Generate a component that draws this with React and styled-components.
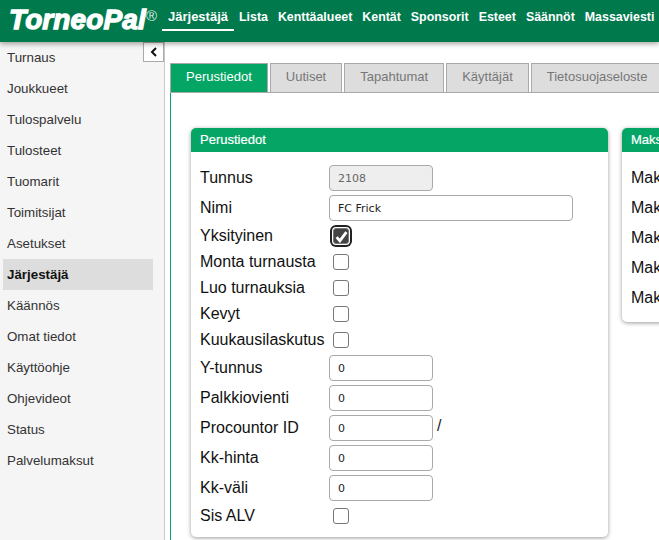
import React from "react";
import styled, { createGlobalStyle } from "styled-components";

const Global = createGlobalStyle`
  html, body { margin: 0; padding: 0; height: 100%; overflow: hidden; background: #fff; }
  body { font-family: "Liberation Sans", Arial, sans-serif; }
  #root { height: 100%; }
`;
const Page = styled.div`
  height: 540px; width: 659px; display: flex; flex-direction: column; overflow: hidden; position: relative;
`;
const Header = styled.header`
  height: 42px; flex: none; background: #007a4d; display: flex; align-items: flex-start;
  box-shadow: 0 2px 5px rgba(0,0,0,.35); position: relative; z-index: 2; padding-left: 9px;
`;
const Logo = styled.div`
  width: 153px; flex: none; color: #fff; font: italic 900 28px/1 "Liberation Sans", sans-serif;
  -webkit-text-stroke: 1.3px #fff; letter-spacing: .1px; padding-top: 6px; white-space: nowrap; position: relative;
  sup { font: 400 15px/1 "Liberation Sans", sans-serif; -webkit-text-stroke: 0; color: #dcece4; position: absolute; left: 137px; top: 8px; }
`;
const Nav = styled.nav`display: flex; gap: 10px; padding-top: 9px;`;
const NavLink = styled.a`
  color: #fff; font-size: ${p => p.$active ? 13 : 12.4}px; font-weight: 700; line-height: 16px; white-space: nowrap; position: relative;
  ${p => p.$active && `
    margin-left: 6px; margin-right: 1px;
    &::after { content: ""; position: absolute; left: -6px; right: -6px; top: 20px; height: 2px; background: #fff; }
  `}
`;
const Body = styled.div`display: flex; flex: 1; min-height: 0;`;
const Sidebar = styled.aside`
  flex: none; background: #f5f5f5; border-right: 1px solid #c8c8c8; padding: 0 11px 0 3px; box-sizing: border-box; width: 165px;
  position: relative;
`;
const Toggle = styled.button`
  position: absolute; right: 0; top: 0; width: 21px; height: 20px; padding: 0; background: #fff; border: 1px solid #aaa;
  display: flex; align-items: center; justify-content: center; box-sizing: border-box;
`;
const SideItem = styled.div`
  height: 31px; line-height: 31px; padding-left: 4px; font-size: 13.33px; color: ${p => p.$active ? "#111" : "#333"};
  font-weight: ${p => p.$active ? 700 : 400}; background: ${p => p.$active ? "#ddd" : "transparent"};
`;
const Main = styled.main`flex: 1; min-width: 0; padding: 21px 0 0 5px; overflow: hidden;`;
const Tabs = styled.div`display: flex; gap: 2px; height: 29px; border-bottom: 1px solid #aaa; box-sizing: content-box;`;
const Tab = styled.div`
  box-sizing: border-box; height: 29px; padding: 0 15px 3px; display: flex; align-items: center; justify-content: center; white-space: nowrap; flex: none;
  font-size: 13px;
  background: ${p => p.$active ? "#05a566" : "#ddd"}; color: ${p => p.$active ? "#fff" : "#777"};
  border: 1px solid #aaa; border-bottom: 0;
`;
const TabBody = styled.div`
  border-left: 1px solid #05a566; padding: 35px 0 0 20px; display: flex; gap: 14px; height: 460px; box-sizing: border-box; align-items: flex-start;
`;
const Card = styled.section`
  flex: none; width: ${p => p.$w}px; background: #fff; border-radius: 5px; box-shadow: 0 1px 4px rgba(0,0,0,.4); overflow: hidden;
`;
const CardHead = styled.h3`
  margin: 0; height: 24px; line-height: 23px; background: #05a566; color: #fff; font-size: 13px; font-weight: 400; padding-left: 9px;
  -webkit-text-stroke: .2px #fff;
`;
const Form = styled.div`padding: 11px 0 8px 9px;`;
const Row = styled.div`display: flex; align-items: center; height: ${p => p.$h}px;`;
const Label = styled.label`width: 129px; flex: none; font-size: 16px; line-height: 1; color: #111; white-space: nowrap;`;
const Input = styled.input`
  box-sizing: border-box; width: ${p => p.$w}px; height: 26px; border: 1px solid #aaa; border-radius: 4px; padding: 0 8px;
  font: 11px "DejaVu Sans", Verdana, sans-serif; color: #222; background: ${p => p.disabled ? "#eee" : "#fff"};
  outline: none;
  &:disabled { color: #666; }
`;
const Check = styled.span`
  box-sizing: border-box; display: flex; align-items: center; justify-content: center; width: 16px; height: 16px; margin-left: 4px;
  border: 1px solid #777; border-radius: 3px; background: ${p => p.$on ? "#444" : "#fff"};
  ${p => p.$on && `box-shadow: 0 0 0 1px #fff, 0 0 0 3px #222;`}
`;
const Slash = styled.span`font-size: 16px; color: #222; margin-left: 4px; margin-top: -4px;`;
const RightBody = styled.div`padding: 11px 0 9px 9px;`;
const RightRow = styled.div`height: 30px; line-height: 30px; font-size: 16px; color: #111; white-space: nowrap;`;

const side = ["Turnaus","Joukkueet","Tulospalvelu","Tulosteet","Tuomarit","Toimitsijat","Asetukset","Järjestäjä","Käännös","Omat tiedot","Käyttöohje","Ohjevideot","Status","Palvelumaksut"];
const nav = ["Järjestäjä","Lista","Kenttäalueet","Kentät","Sponsorit","Esteet","Säännöt","Massaviesti"];
const tabs = ["Perustiedot","Uutiset","Tapahtumat","Käyttäjät","Tietosuojaseloste"];

const Field = ({ label, w = 104, value, disabled, after }) => (
  <Row $h={30}><Label>{label}</Label><Input $w={w} defaultValue={value} disabled={disabled} />{after}</Row>
);
const Box = ({ label, on }) => (
  <Row $h={26}><Label>{label}</Label><Check $on={on}>
    {on && <svg width="13" height="13" viewBox="0 0 12 12"><path d="M1.5 6.5 4.5 10 10.5 2" fill="none" stroke="#fff" strokeWidth="2.6" /></svg>}
  </Check></Row>
);

export default function App() {
  return (
    <Page>
      <Global />
      <Header>
        <Logo>TorneoPal<sup>®</sup></Logo>
        <Nav>{nav.map((n, i) => <NavLink key={n} $active={i === 0}>{n}</NavLink>)}</Nav>
      </Header>
      <Body>
        <Sidebar>
          <Toggle aria-label="Piilota">
            <svg width="10" height="10" viewBox="0 0 10 10"><path d="M7 1 3 5l4 4" fill="none" stroke="#111" strokeWidth="2" /></svg>
          </Toggle>
          {side.map(s => <SideItem key={s} $active={s === "Järjestäjä"}>{s}</SideItem>)}
        </Sidebar>
        <Main>
          <Tabs>{tabs.map((t, i) => <Tab key={t} $active={i === 0}>{t}</Tab>)}</Tabs>
          <TabBody>
            <Card $w={417}>
              <CardHead>Perustiedot</CardHead>
              <Form>
                <Field label="Tunnus" value="2108" disabled />
                <Field label="Nimi" w={244} value="FC Frick" />
                <Box label="Yksityinen" on />
                <Box label="Monta turnausta" />
                <Box label="Luo turnauksia" />
                <Box label="Kevyt" />
                <Box label="Kuukausilaskutus" />
                <Field label="Y-tunnus" value="0" />
                <Field label="Palkkiovienti" value="0" />
                <Field label="Procountor ID" value="0" after={<Slash>/</Slash>} />
                <Field label="Kk-hinta" value="0" />
                <Field label="Kk-väli" value="0" />
                <Box label="Sis ALV" />
              </Form>
            </Card>
            <Card $w={300}>
              <CardHead>Maksutavat</CardHead>
              <RightBody>
                {["Maksu 1","Maksu 2","Maksu 3","Maksu 4","Maksu 5"].map(m => <RightRow key={m}>{m}</RightRow>)}
              </RightBody>
            </Card>
          </TabBody>
        </Main>
      </Body>
    </Page>
  );
}
